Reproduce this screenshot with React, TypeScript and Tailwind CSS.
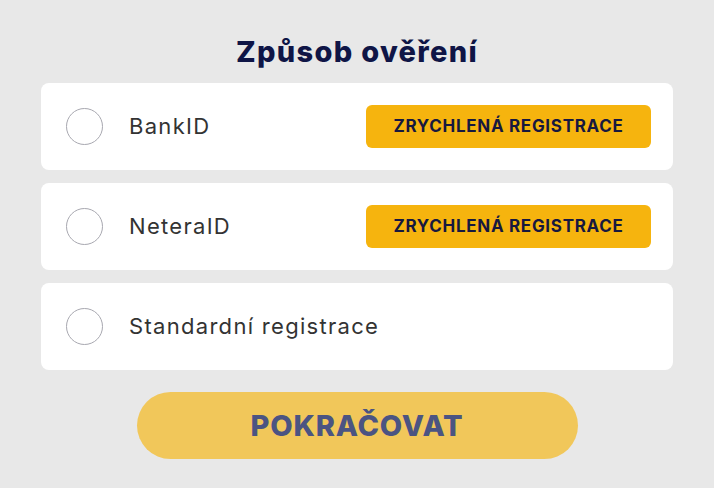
import React from 'react';

const options = [
  { id: 'bankid', label: 'BankID', fast: true },
  { id: 'neteraid', label: 'NeteraID', fast: true },
  { id: 'standard', label: 'Standardní registrace', fast: false },
];

const App: React.FC = () => {
  return (
    <div
      className="min-h-screen w-full bg-[#e8e8e8] flex flex-col items-center"
      style={{ fontFamily: 'Inter, "Noto Sans", sans-serif' }}
    >
      <h1 className="mt-[32px] h-[40px] text-[29px] leading-[40px] font-extrabold text-[#0f1546] tracking-[1.3px]">
        Způsob ověření
      </h1>

      <div className="mt-[11px] w-[632px] flex flex-col gap-[13px]">
        {options.map((opt) => (
          <label
            key={opt.id}
            className="h-[87px] bg-white rounded-[8px] flex items-center pl-[25px] pr-[22px] cursor-pointer"
          >
            <span className="w-[37px] h-[37px] rounded-full border-[1.5px] border-[#a8a8b0] bg-white shrink-0" />
            <span className="ml-[26px] flex-1 text-[22px] text-[#333333] font-normal tracking-[1.3px]">
              {opt.label}
            </span>
            {opt.fast && (
              <span className="w-[285px] h-[43px] rounded-[6px] bg-[#f6b40e] flex items-center justify-center text-[17px] font-bold text-[#17183f] tracking-[0.7px]">
                ZRYCHLENÁ REGISTRACE
              </span>
            )}
          </label>
        ))}
      </div>

      <button className="mt-[22px] w-[441px] h-[67px] rounded-full bg-[#f1c75a] text-[29px] font-extrabold text-[#4b5482] tracking-[0.8px]">
        POKRAČOVAT
      </button>
    </div>
  );
};

export default App;
